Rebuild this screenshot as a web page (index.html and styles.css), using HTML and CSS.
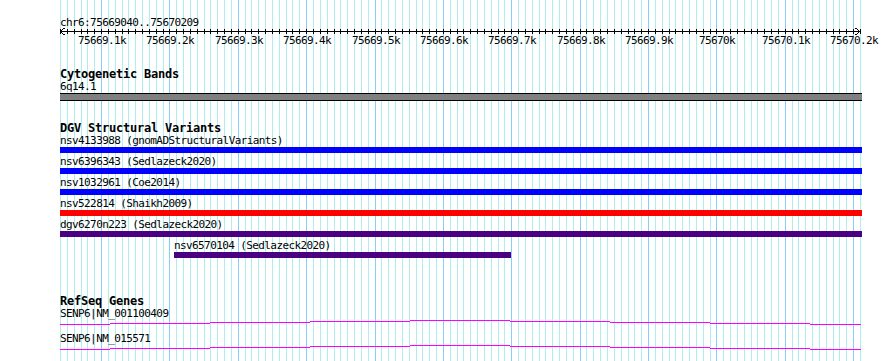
FILE: index.html
```html
<!DOCTYPE html>
<html lang="en">
<head>
    <meta charset="UTF-8">
    <meta name="viewport" content="width=device-width, initial-scale=1.0">
    <title>chr6:75669040..75670209</title>
    <link rel="stylesheet" href="styles.css">
</head>
<body>
    <div id="browser" class="browser">
        <svg id="grid" class="grid" width="890" height="361"></svg>

        <div class="ruler">
            <div class="locus">chr6:75669040..75670209</div>
            <svg id="scale" class="scale" width="890" height="19"></svg>
        </div>

        <div class="track">
            <h2 class="track-title">Cytogenetic Bands</h2>
            <div class="feature" data-start="75669040" data-end="75670213">
                <div class="label">6q14.1</div>
                <div class="bar band"></div>
            </div>
        </div>

        <div class="track track-dgv">
            <h2 class="track-title">DGV Structural Variants</h2>
            <div class="feature" data-start="75669040" data-end="75670213">
                <div class="label">nsv4133988 (gnomADStructuralVariants)</div>
                <div class="bar bar-blue"></div>
            </div>
            <div class="feature" data-start="75669040" data-end="75670213">
                <div class="label">nsv6396343 (Sedlazeck2020)</div>
                <div class="bar bar-blue"></div>
            </div>
            <div class="feature" data-start="75669040" data-end="75670213">
                <div class="label">nsv1032961 (Coe2014)</div>
                <div class="bar bar-blue"></div>
            </div>
            <div class="feature" data-start="75669040" data-end="75670213">
                <div class="label">nsv522814 (Shaikh2009)</div>
                <div class="bar bar-red"></div>
            </div>
            <div class="feature" data-start="75669040" data-end="75670213">
                <div class="label">dgv6270n223 (Sedlazeck2020)</div>
                <div class="bar bar-purple"></div>
            </div>
            <div class="feature" data-start="75669207" data-end="75669700">
                <div class="label">nsv6570104 (Sedlazeck2020)</div>
                <div class="bar bar-purple"></div>
            </div>
        </div>

        <div class="track">
            <h2 class="track-title">RefSeq Genes</h2>
            <div class="gene">
                <div class="label">SENP6|NM_001100409</div>
                <svg class="intron" width="890" height="6"></svg>
            </div>
            <div class="gene">
                <div class="label">SENP6|NM_015571</div>
                <svg class="intron" width="890" height="6"></svg>
            </div>
        </div>
    </div>

    <script>
        var VIEW_START = 75669040;
        var VIEW_END = 75670209;
        var LEFT = 60;
        var SCALE = 800 / 1170;
        var SVG_NS = "http://www.w3.org/2000/svg";

        function px(bp) {
            return LEFT + (bp - VIEW_START) * SCALE;
        }

        function rect(parent, x, y, w, h, cls) {
            var r = document.createElementNS(SVG_NS, "rect");
            r.setAttribute("x", x);
            r.setAttribute("y", y);
            r.setAttribute("width", w);
            r.setAttribute("height", h);
            if (cls) r.setAttribute("class", cls);
            parent.appendChild(r);
        }

        // grid lines + ruler ticks, one every 10bp
        var grid = document.getElementById("grid");
        var scale = document.getElementById("scale");

        rect(scale, 60, 3, 801, 1, "ink");
        for (var bp = VIEW_START; bp <= VIEW_END + 1; bp += 10) {
            var x = Math.round(px(bp));
            var major = bp % 100 === 0;
            rect(grid, x, 0, 1, 361, major ? "grid-major" : "grid-minor");
            rect(scale, x, 1, 1, 5, "ink");
            if (major) {
                var t = document.createElementNS(SVG_NS, "text");
                t.setAttribute("x", x + 1);
                t.setAttribute("y", 16);
                t.setAttribute("class", "tick-label");
                t.textContent = (bp / 1000) + "k";
                scale.appendChild(t);
            }
        }

        // arrow heads at both ends (row, x, width)
        [[0, 63, 2], [1, 62, 1], [2, 61, 1], [4, 61, 1], [5, 62, 1], [6, 63, 2]].forEach(function (p) {
            rect(scale, p[1], p[0], p[2], 1, "ink");
            rect(scale, 920 - p[1] - p[2], p[0], p[2], 1, "ink");
        });

        // feature bars
        var features = document.querySelectorAll(".feature");
        for (var f = 0; f < features.length; f++) {
            var el = features[f];
            var left = Math.round(px(+el.dataset.start));
            var right = Math.round(px(+el.dataset.end));
            el.style.paddingLeft = left + "px";
            el.querySelector(".bar").style.width = (right - left) + "px";
        }

        // intron hats, drawn in 1px steps
        var steps = [60, 110, 210, 310, 410, 510, 610, 710, 810, 861];
        var drops = [4, 3, 2, 1, 0, 1, 2, 3, 4];
        var introns = document.querySelectorAll(".intron");
        for (var n = 0; n < introns.length; n++) {
            for (var s = 0; s < drops.length; s++) {
                rect(introns[n], steps[s], 1 + drops[s], steps[s + 1] - steps[s], 1, "hat");
            }
        }
    </script>
</body>
</html>
```

FILE: styles.css
```css
body {
    margin: 0;
    background: #fff;
    color: #000;
    font-family: "DejaVu Sans Mono", "Liberation Mono", monospace;
}

.browser {
    position: relative;
    z-index: 0;
    width: 890px;
    height: 361px;
    padding-top: 17px;
    box-sizing: border-box;
    overflow: hidden;
}

.grid {
    position: absolute;
    top: 0;
    left: 0;
    z-index: -1;
}

.grid-minor {
    fill: #afeeee;
}

.grid-major {
    fill: #87cefa;
}

.ink {
    fill: #000;
}

.locus,
.label {
    font-size: 11px;
    line-height: 11px;
    letter-spacing: -0.6px;
    white-space: nowrap;
}

.locus {
    padding-left: 60px;
}

.scale {
    display: block;
}

.tick-label {
    font-family: "DejaVu Sans Mono", "Liberation Mono", monospace;
    font-size: 11px;
    letter-spacing: -0.6px;
    text-anchor: middle;
}

.track {
    margin-top: 21px;
}

.track-dgv {
    padding-bottom: 16px;
}

.track-title {
    margin: 0 0 1px;
    padding-left: 60px;
    font-size: 12px;
    line-height: 12px;
    letter-spacing: -0.22px;
    font-weight: bold;
}

.feature + .feature {
    margin-top: 3px;
}

.bar {
    height: 6px;
    margin-top: 1px;
}

.band {
    height: 6px;
    background: #808080;
    border-top: 1px solid #000;
    border-bottom: 1px solid #000;
}

.bar-blue {
    background: #0000ff;
}

.bar-red {
    background: #ff0000;
}

.bar-purple {
    background: #4b0082;
}

.gene {
    padding-left: 60px;
}

.gene + .gene {
    margin-top: 8px;
}

.intron {
    display: block;
    margin-left: -60px;
}

.hat {
    fill: #ff00ff;
}
```
